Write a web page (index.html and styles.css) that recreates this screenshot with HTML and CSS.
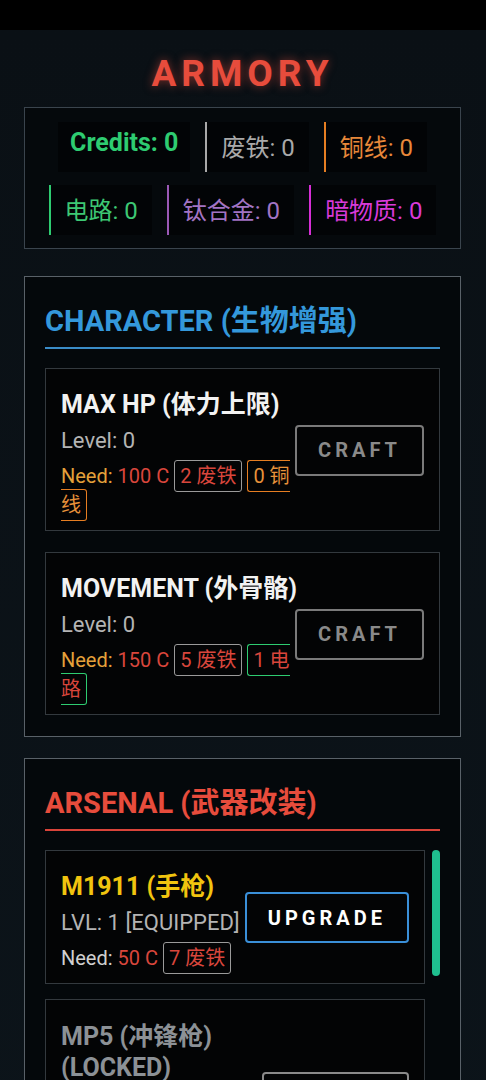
FILE: index.html
```html
<!DOCTYPE html>
<html lang="zh">
<head>
<meta charset="utf-8">
<title>Armory</title>
<link rel="stylesheet" href="styles.css">
</head>
<body>
<div class="statusbar"></div>
<main class="page">
  <h1 class="title">ARMORY</h1>
  <div class="resources">
    <div class="res res-credits">Credits: 0</div>
    <div class="res res-scrap">废铁: 0</div>
    <div class="res res-copper">铜线: 0</div>
    <div class="res res-circuit">电路: 0</div>
    <div class="res res-titan">钛合金: 0</div>
    <div class="res res-dark">暗物质: 0</div>
  </div>

  <section class="panel">
    <h2 class="panel-title title-blue">CHARACTER (生物增强)</h2>
    <div class="cards cards-char">
      <div class="card">
        <div class="info">
          <div class="name">MAX HP (体力上限)</div>
          <div class="level">Level: 0</div>
          <div class="need"><span class="label-orange">Need:</span> <span class="cost">100 C</span> <span class="tag tag-scrap">2 废铁</span> <span class="tag tag-copper">0 铜线</span></div>
        </div>
        <button class="btn btn-craft">CRAFT</button>
      </div>
      <div class="card">
        <div class="info">
          <div class="name">MOVEMENT (外骨骼)</div>
          <div class="level">Level: 0</div>
          <div class="need"><span class="label-orange">Need:</span> <span class="cost">150 C</span> <span class="tag tag-scrap">5 废铁</span> <span class="tag tag-circuit">1 电路</span></div>
        </div>
        <button class="btn btn-craft">CRAFT</button>
      </div>
    </div>
  </section>

  <section class="panel">
    <h2 class="panel-title title-red">ARSENAL (武器改装)</h2>
    <div class="scroll">
      <div class="cards cards-arsenal">
        <div class="card">
          <div class="info">
            <div class="name name-yellow">M1911 (手枪)</div>
            <div class="level">LVL: 1 [EQUIPPED]</div>
            <div class="need"><span class="label-gray">Need:</span> <span class="cost">50 C</span> <span class="tag tag-scrap">7 废铁</span></div>
          </div>
          <button class="btn btn-upgrade">UPGRADE</button>
        </div>
        <div class="card">
          <div class="info">
            <div class="name name-locked">MP5 (冲锋枪) (LOCKED)</div>
            <div class="level">LVL: 0</div>
            <div class="need"><span class="label-gray">Need:</span> <span class="cost">500 C</span> <span class="tag tag-scrap">10 废铁</span> <span class="tag tag-circuit">5 电路</span></div>
          </div>
          <button class="btn btn-locked">UNLOCK</button>
        </div>
      </div>
      <div class="track"><div class="thumb"></div></div>
    </div>
  </section>
</main>
</body>
</html>
```

FILE: styles.css
```css
* { box-sizing: border-box; }

html, body {
  margin: 0;
  padding: 0;
  background: #0b1217;
}

body {
  font-family: Roboto, "Noto Sans CJK SC", sans-serif;
  color: #d0d0d0;
  overflow: hidden;
  height: 1080px;
}

.statusbar {
  height: 30px;
  background: #000;
}

.page {
  padding: 0 25px 0 24px;
  background: linear-gradient(#0a1015, #0c141a);
}

.title {
  margin: 0;
  padding: 22px 0 11px;
  text-align: center;
  font-size: 37px;
  line-height: 44px;
  font-weight: 700;
  letter-spacing: 5px;
  color: #e74c3c;
  text-shadow: 0 0 10px rgba(231, 76, 60, 0.55);
}

.resources {
  border: 1px solid #3a444d;
  background: #05090c;
  padding: 14px 8px 13px;
  display: flex;
  flex-wrap: wrap;
  justify-content: center;
  column-gap: 15px;
  row-gap: 13px;
}

.res {
  font-size: 24px;
  line-height: 26px;
  padding: 13px 14px 11px;
  border-left: 2px solid transparent;
  background: rgba(0, 0, 0, 0.45);
}

.res-credits {
  border-left: none;
  padding: 8px 12px 16px;
  font-size: 25px;
  font-weight: 700;
  color: #2ecc71;
}
.res-scrap { border-left-color: #a9a9a9; color: #a9a9a9; }
.res-copper { border-left-color: #e67e22; color: #e8883a; }
.res-circuit { border-left-color: #2ecc71; color: #3dc874; }
.res-titan { border-left-color: #9b59b6; color: #a274c4; }
.res-dark { border-left-color: #d62ed6; color: #d93ad9; }

.panel {
  margin-top: 27px;
  border: 1px solid #596168;
  background: #04080b;
  padding: 25px 20px 21px;
}

.panel + .panel { margin-top: 21px; }

.panel-title {
  margin: 0 0 19px;
  padding-bottom: 7px;
  font-size: 29px;
  line-height: 38px;
  font-weight: 700;
  border-bottom: 2px solid;
}

.title-blue { color: #3498db; border-bottom-color: #3a8cc8; }
.title-red { color: #e74c3c; border-bottom-color: #d9443a; }

.cards {
  display: flex;
  flex-direction: column;
  gap: 21px;
}

.cards-arsenal {
  flex: 1;
  gap: 15px;
}

.card {
  display: flex;
  align-items: center;
  gap: 5px;
  padding: 11px 15px 10px;
  border: 1px solid #33393e;
  background: #030405;
}

.info {
  flex: 1;
  min-width: 0;
}

.name {
  margin-top: 10px;
  font-size: 25px;
  line-height: 30px;
  font-weight: 700;
  color: #f2f2f2;
  white-space: nowrap;
}

.name-yellow { color: #f1c40f; }
.name-locked { color: #8c9196; white-space: normal; line-height: 31px; }

.level {
  margin-top: 8px;
  font-size: 22px;
  line-height: 26px;
  color: #b4b4b4;
}

.need {
  margin-top: 8px;
  font-size: 20px;
  line-height: 29px;
}

.label-orange { color: #e5a13a; }
.label-gray { color: #d0d0d0; }
.cost { color: #d9463c; }

.tag {
  border: 1px solid;
  border-radius: 3px;
  padding: 3px 5px;
}

.tag-scrap { border-color: #9a9a9a; color: #d9463c; }
.tag-copper { border-color: #e67e22; color: #e8923a; }
.tag-circuit { border-color: #2ecc71; color: #d9463c; }

.btn {
  flex-shrink: 0;
  height: 51px;
  padding: 0 21px;
  border: 2px solid;
  border-radius: 4px;
  background: #030405;
  font-family: Roboto, "Noto Sans CJK SC", sans-serif;
  font-size: 20px;
  font-weight: 700;
  letter-spacing: 4px;
}

.btn-craft { border-color: #7a7a7a; color: #8a8a8a; }
.btn-upgrade { border-color: #3a8fd8; color: #ffffff; }
.btn-locked { border-color: #8a8a8a; color: #8a8a8a; }

.scroll {
  display: flex;
  gap: 7px;
}

.track {
  width: 8px;
  flex-shrink: 0;
}

.thumb {
  height: 126px;
  border-radius: 4px;
  background: #1fbf8f;
}
```
